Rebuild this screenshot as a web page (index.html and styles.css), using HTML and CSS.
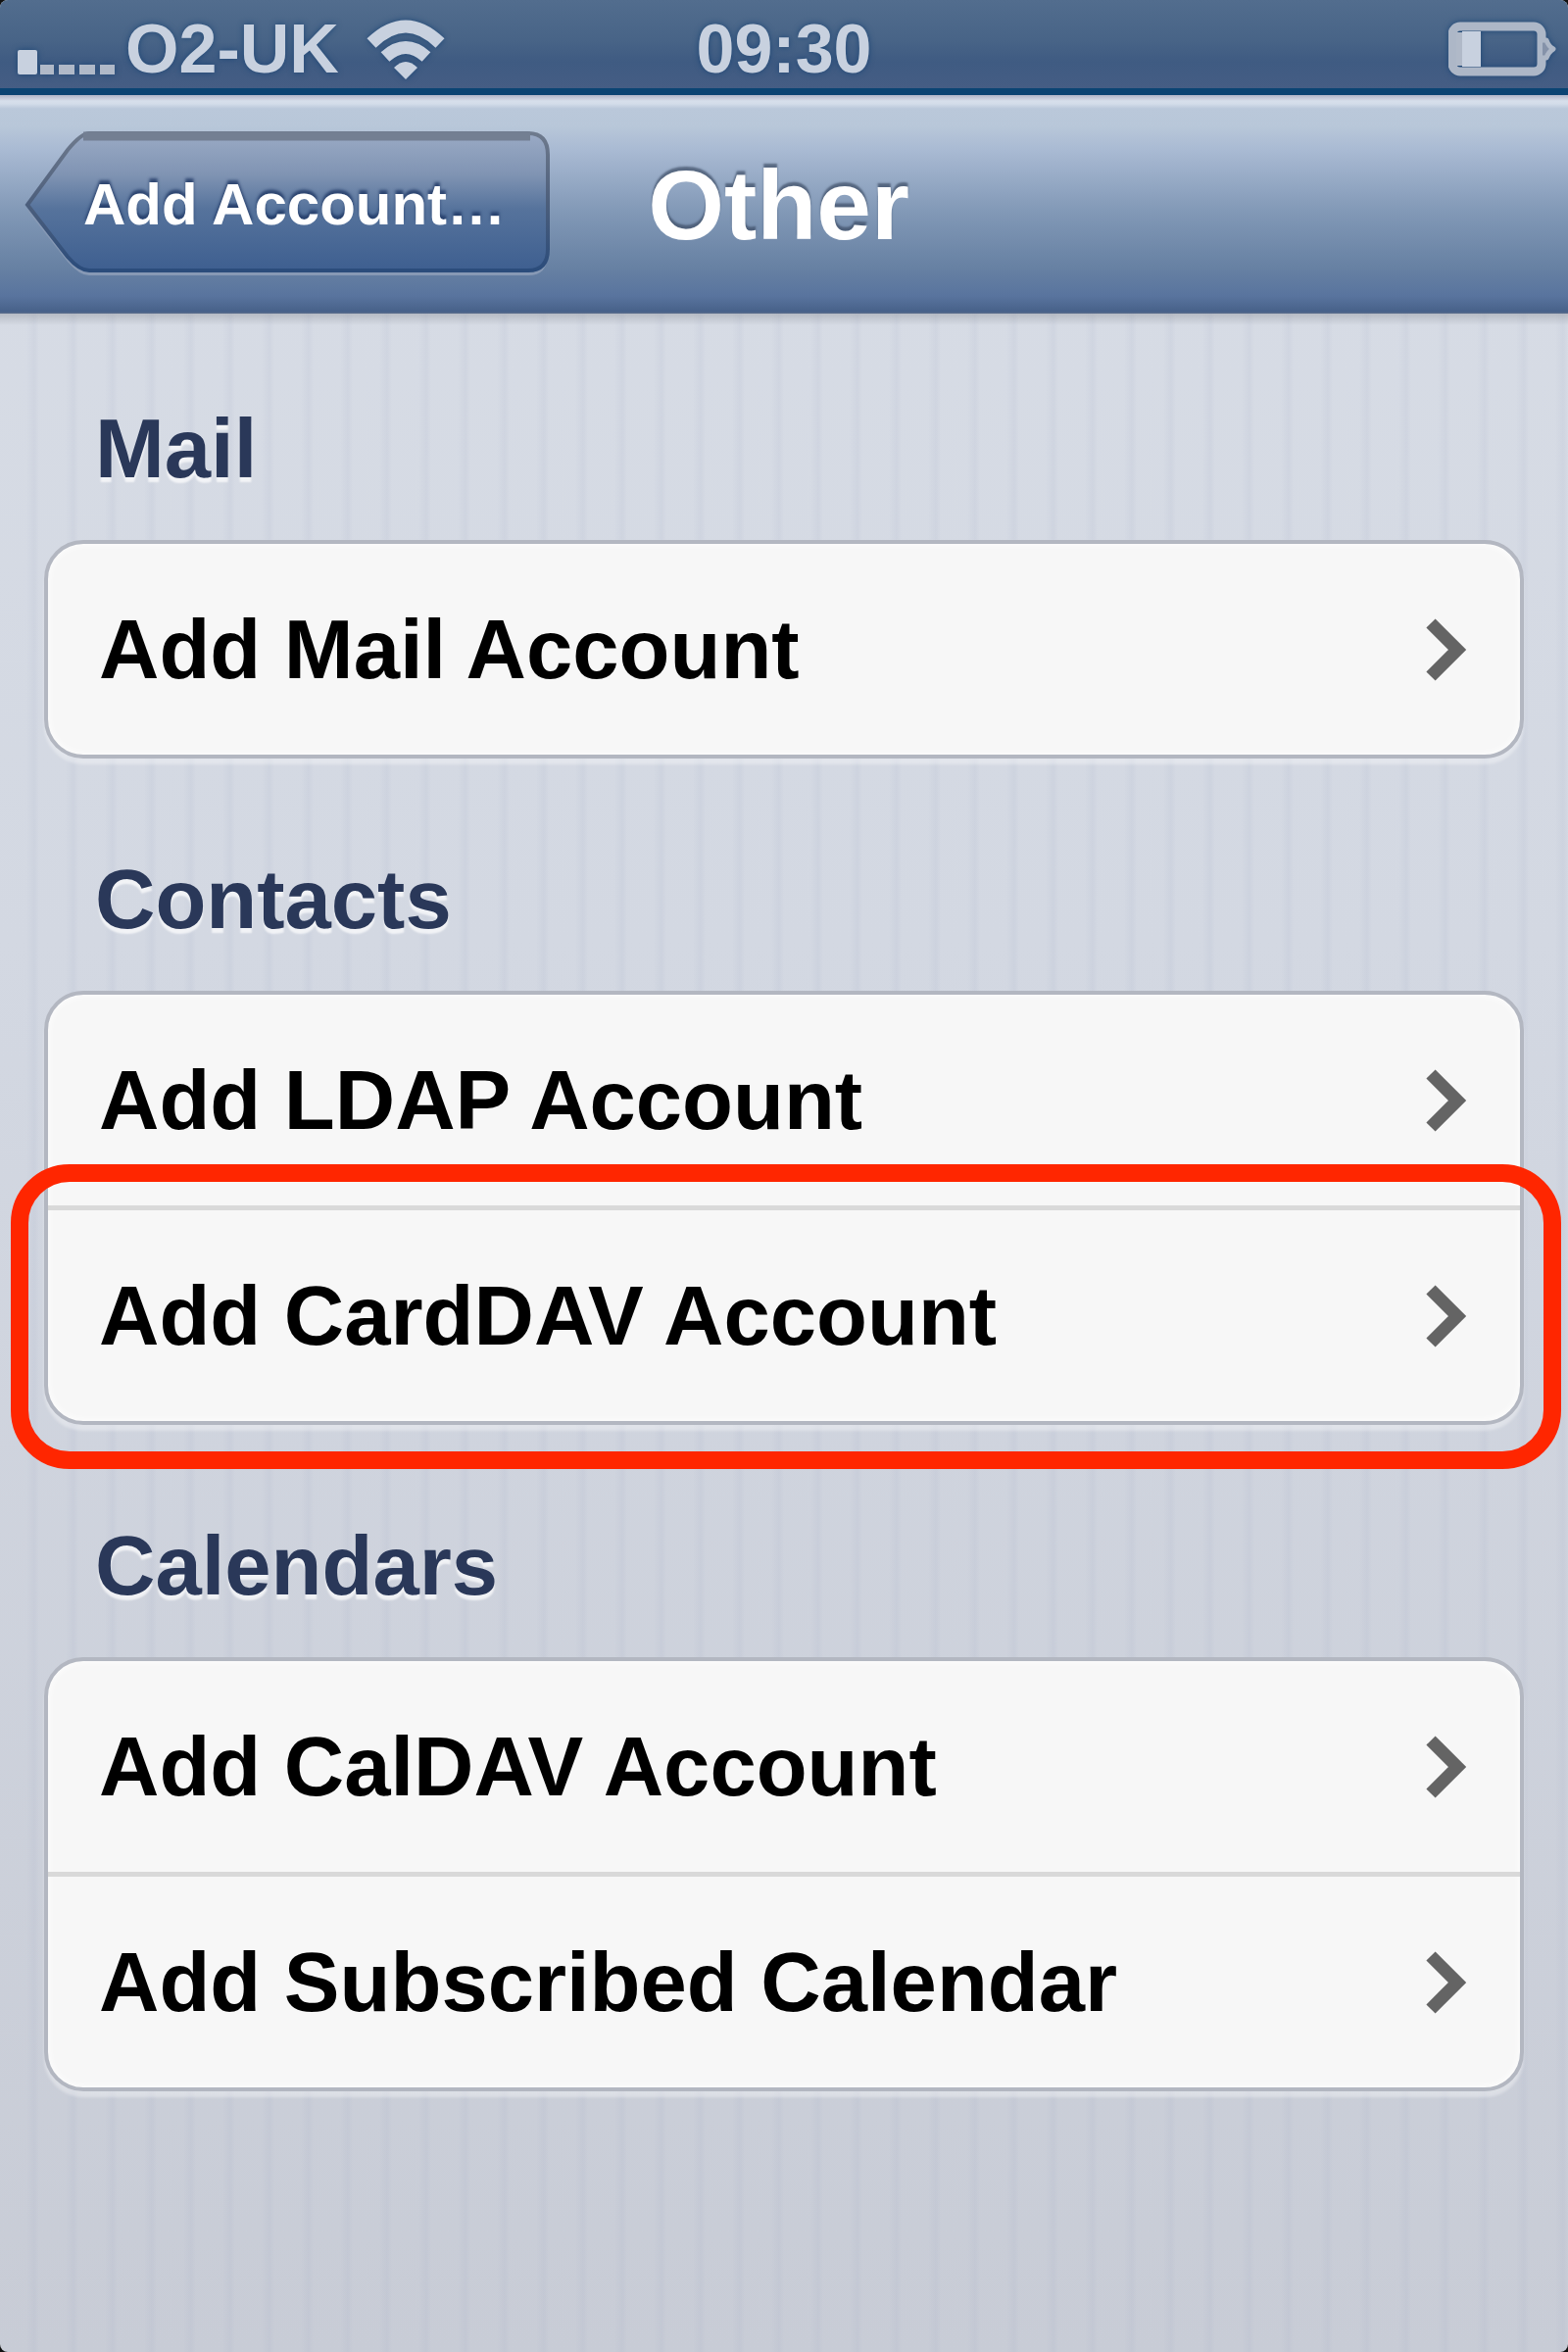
FILE: index.html
```
<!doctype html>
<html lang="en">
<head>
    <meta charset="UTF-8">
    <title>Other</title>

    <meta name="viewport" content="width=device-width">

    <link rel="stylesheet" href="styles.css">
</head>
<body>

    <div id="screen">

        <div class="status">
            <div class="carrier">
                <svg class="signal" width="100" height="26" viewBox="0 0 100 26">
                    <rect x="0" y="0" width="20" height="25" rx="2"/>
                    <path class="dim" d="M23 15h14v10H23zM42 15h16v10H42zM63 15h16v10H63zM84 15h15v10H84z"/>
                </svg>
                <span>O2-UK</span>
                <svg class="wifi" width="80" height="62" viewBox="0 0 80 62">
                    <path class="arc" d="M5 25Q40 -9 75 25"/>
                    <path class="arc" d="M19 39Q40 20 61 39"/>
                    <path d="M28 50Q40 38 52 50L40 62Z"/>
                </svg>
            </div>
            <span class="clock">09:30</span>
            <svg class="battery" width="112" height="58" viewBox="0 0 112 58">
                <rect class="shell" x="4" y="6" width="91" height="46" rx="8"/>
                <path class="cap" d="M96 20h4q2 6 7 9q-5 3-7 9h-4"/>
                <rect class="dim" x="8" y="12" width="6" height="34"/>
                <rect x="14" y="11" width="19" height="36"/>
            </svg>
        </div>

        <div class="nav">
            <a class="back" href="#">
                <svg viewBox="0 0 540 150" preserveAspectRatio="none">
                    <defs>
                        <linearGradient id="backfill" x1="0" y1="0" x2="0" y2="1">
                            <stop offset="0" stop-color="#9aaac5"/>
                            <stop offset=".3" stop-color="#8094b3"/>
                            <stop offset=".55" stop-color="#56739c"/>
                            <stop offset="1" stop-color="#3e5f90"/>
                        </linearGradient>
                        <linearGradient id="backline" x1="0" y1="0" x2="0" y2="1">
                            <stop offset="0" stop-color="#6e7a8d"/>
                            <stop offset=".5" stop-color="#4d5f7c"/>
                            <stop offset="1" stop-color="#2b4c7b"/>
                        </linearGradient>
                    </defs>
                    <path class="glow" d="M3 81L44 24Q58 7 66 7H514Q534 7 534 29V125Q534 147 514 147H66Q56 147 44 133Z"/>
                    <path class="shape" d="M3 75L44 19Q58 2 66 2H514Q534 2 534 24V120Q534 142 514 142H66Q56 142 44 128Z"/>
                    <path class="lip" d="M60 5H516"/>
                </svg>
                <span>Add Account…</span>
            </a>
            <h1>Other</h1>
        </div>

        <div class="content">

            <h2>Mail</h2>
            <ul class="group">
                <li>
                    <a href="#">Add Mail Account
                        <svg class="arrow" viewBox="0 0 42 64"><path d="M5 5L32 32L5 59"/></svg>
                    </a>
                </li>
            </ul>

            <h2>Contacts</h2>
            <ul class="group">
                <li>
                    <a href="#">Add LDAP Account
                        <svg class="arrow" viewBox="0 0 42 64"><path d="M5 5L32 32L5 59"/></svg>
                    </a>
                </li>
                <li class="marked">
                    <a href="#">Add CardDAV Account
                        <svg class="arrow" viewBox="0 0 42 64"><path d="M5 5L32 32L5 59"/></svg>
                    </a>
                </li>
            </ul>

            <h2>Calendars</h2>
            <ul class="group">
                <li>
                    <a href="#">Add CalDAV Account
                        <svg class="arrow" viewBox="0 0 42 64"><path d="M5 5L32 32L5 59"/></svg>
                    </a>
                </li>
                <li>
                    <a href="#">Add Subscribed Calendar
                        <svg class="arrow" viewBox="0 0 42 64"><path d="M5 5L32 32L5 59"/></svg>
                    </a>
                </li>
            </ul>

        </div>

    </div>

</body>
</html>
```
FILE: styles.css
```
* {
    box-sizing: border-box;
}

body {
    margin: 0;
    background-color: #111;
    font-family: "Liberation Sans", Helvetica, Arial, sans-serif;
    font-weight: bold;
}

a {
    color: inherit;
    text-decoration: none;
}

h1, h2, ul {
    margin: 0;
    padding: 0;
}

#screen {
    min-height: 100vh;
    border-radius: 8px;
    overflow: hidden;
    background:
        repeating-linear-gradient(90deg, rgba(150, 160, 190, 0) 0 27px, rgba(150, 160, 190, 0.1) 35px, rgba(150, 160, 190, 0) 40px),
        linear-gradient(#d8dde6, #d3d8e2 40%, #c8ccd6);
}


/* status bar */

.status {
    display: grid;
    grid-template-columns: 1fr auto 1fr;
    align-items: center;
    height: 97px;
    padding: 5px 10px 0 18px;
    border-bottom: 7px solid #0b4473;
    background: linear-gradient(#526d8e, #486487 45%, #3f5b82 70%, #455d84);
    color: #c8d1df;
    font-size: 70px;
    line-height: 90px;
    text-shadow: 0 0 6px #1d4675;
}

.status svg {
    fill: #c8d1df;
    filter: drop-shadow(0 0 3px #1d4675);
}

.carrier {
    display: flex;
    align-items: center;
}

.signal {
    margin: 28px 10px 0 0;
}

.status .dim {
    fill: #b0b9c8;
}

.wifi {
    margin-left: 28px;
}

.status .arc {
    fill: none;
    stroke: #c8d1df;
    stroke-width: 13px;
}

.clock {
    padding-right: 8px;
}

.battery {
    justify-self: end;
}

.status .shell {
    fill: none;
    stroke: #adb7c7;
    stroke-width: 9px;
}

.status .cap {
    fill: #8592a9;
    stroke: #adb7c7;
    stroke-width: 5px;
    stroke-linejoin: round;
}


/* navigation bar */

.nav {
    display: grid;
    grid-template-columns: 1fr auto 1fr;
    align-items: center;
    height: 223px;
    padding: 0 36px 0 25px;
    background: linear-gradient(#b0b5c8, #d7dfeb 6px, #d3dce9 9px, #bac8da 14px, #b8c7d9 32px, #a9bad3 56px, #8198b6 120px, #6781a3 176px, #59749e 205px, #476189 221px, #5f708d);
    color: #fff;
}

.nav h1 {
    font-size: 100px;
    line-height: 120px;
    text-shadow: 0 -4px 2px rgba(60, 75, 100, 0.7);
}

.back {
    display: grid;
    justify-self: start;
    height: 150px;
    font-size: 60px;
    line-height: 150px;
    text-shadow: 0 -4px 3px rgba(25, 50, 95, 0.75);
}

.back svg,
.back span {
    grid-area: 1 / 1;
}

.back svg {
    width: 100%;
    height: 150px;
}

.back span {
    padding: 0 48px 0 60px;
}

.back .shape {
    fill: url(#backfill);
    stroke: url(#backline);
    stroke-width: 4px;
}

.back .glow {
    fill: #8799b5;
}

.back .lip {
    stroke: #737f92;
    stroke-width: 9px;
}


/* grouped lists */

.content {
    padding: 88px 45px;
    background: linear-gradient(rgba(150, 155, 165, 0.5), transparent 12px);
}

.content h2 {
    padding: 0 52px;
    margin-bottom: 43px;
    color: #2a3859;
    font-size: 85px;
    line-height: 100px;
    text-shadow: 0 5px 2px rgba(255, 255, 255, 0.7);
}

.group {
    list-style: none;
    margin-bottom: 94px;
    border: 4px solid #b3b7c1;
    border-radius: 40px;
    background-color: #f7f7f7;
    box-shadow: 0 6px 3px rgba(255, 255, 255, 0.35), inset 0 0 8px #fff;
}

.group li {
    position: relative;
}

.group li + li {
    border-top: 5px solid #d9d9d9;
}

.group a {
    display: flex;
    justify-content: space-between;
    align-items: center;
    padding: 0 54px 0 52px;
    color: #000;
    font-size: 85px;
    line-height: 215px;
}

.arrow {
    width: 42px;
    height: 64px;
    fill: none;
    stroke: #646464;
    stroke-width: 13px;
}

/* red ring round the row to pick */
.marked::after {
    content: "";
    position: absolute;
    top: -47px;
    right: -42px;
    bottom: -49px;
    left: -38px;
    border: 18px solid #ff2600;
    border-radius: 60px;
    pointer-events: none;
}
```
